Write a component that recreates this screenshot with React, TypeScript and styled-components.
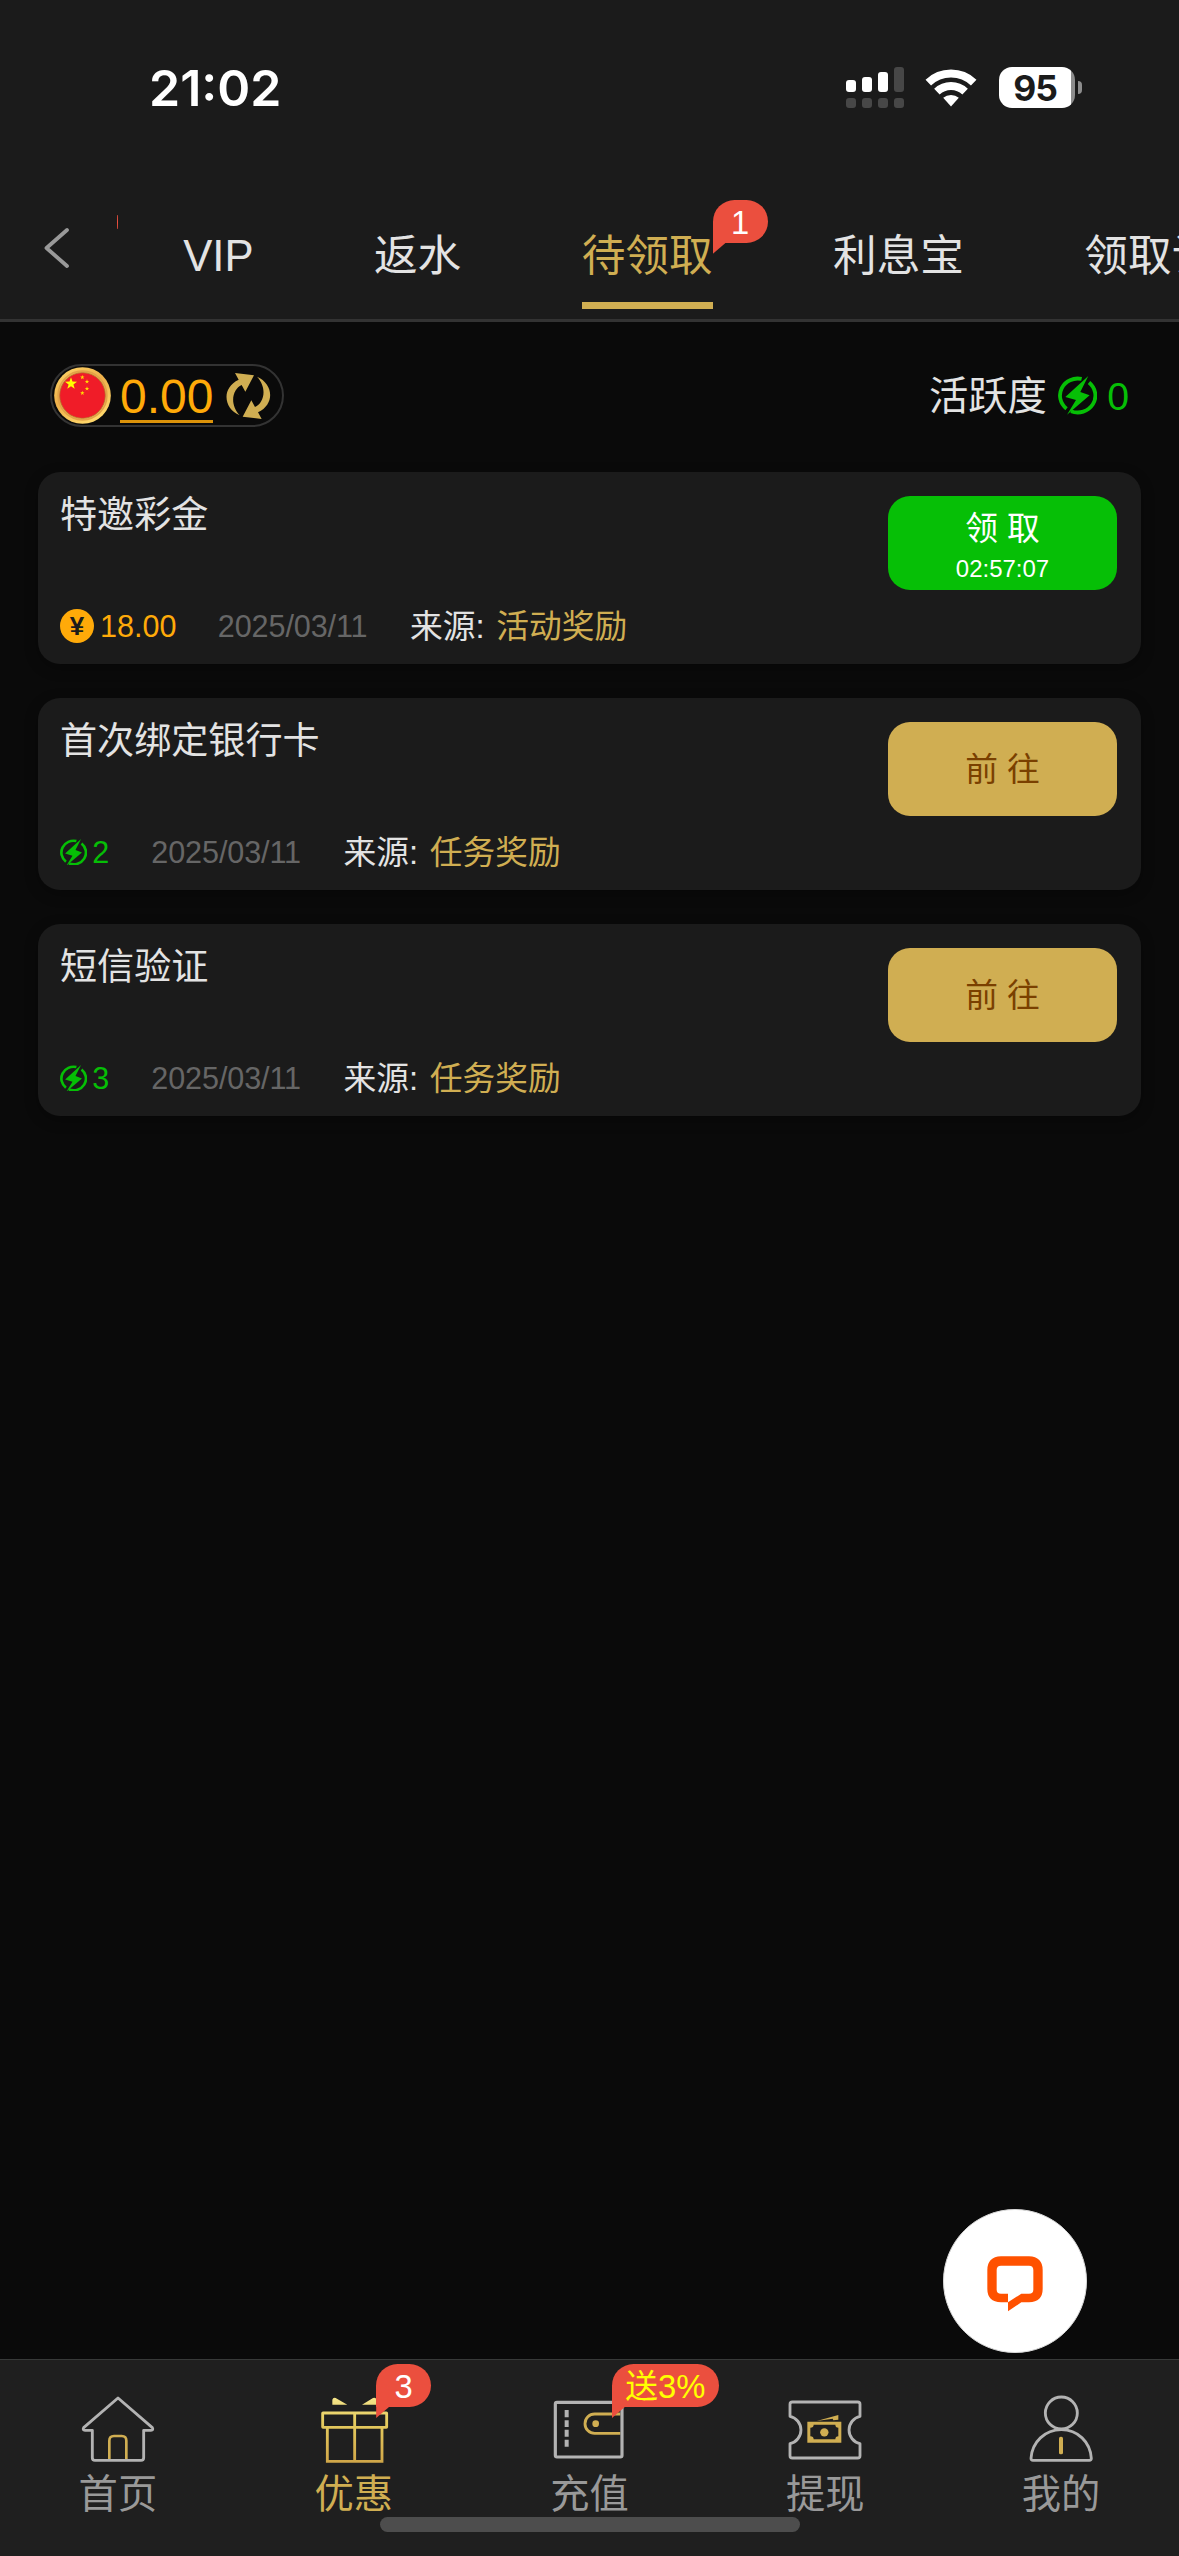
import React from "react";
import styled, { createGlobalStyle } from "styled-components";

const GOLD = "#d0ae52";
const GREEN = "#06bf06";
const RED = "#eb4f3e";
const ORANGE = "#ffaa09";
const GREY = "#b3b3b3";

const GlobalStyle = createGlobalStyle`
  * { box-sizing: border-box; }
  body {
    margin: 0;
    background: #0a0a0a;
    font-family: "Liberation Sans", "Noto Sans CJK SC", sans-serif;
  }
  svg { display: block; flex: none; }
`;

const Screen = styled.div`
  position: relative;
  display: flex;
  flex-direction: column;
  width: 1179px;
  height: 2556px;
  overflow: hidden;
  background: #0a0a0a;
  color: #e3e3e3;
`;

/* ---------- Header ---------- */

const Header = styled.header`
  height: 322px;
  background: #1b1b1b;
  border-bottom: 3px solid #333;
`;

const StatusBar = styled.div`
  display: flex;
  justify-content: space-between;
  height: 190px;
  padding: 67px 97px 0 149px;
`;

const Clock = styled.div`
  height: 42px;
  line-height: 42px;
  color: #fff;
  font-family: Inter, sans-serif;
  font-size: 50px;
  font-weight: 600;
  letter-spacing: 0;
`;

const StatusIcons = styled.div`
  display: flex;
  align-items: flex-start;
  height: 42px;
`;

const Wifi = styled.svg`
  margin: 2px 22px 0 21px;
`;

const Battery = styled.div`
  display: flex;
  align-items: center;
  height: 41px;
`;

const BatteryBody = styled.div`
  width: 76px;
  height: 41px;
  border-radius: 13px;
  background: linear-gradient(90deg, #fff 72px, #8d8d8d 72px);
  color: #1b1b1b;
  font-family: Inter, sans-serif;
  font-size: 35.5px;
  font-weight: 700;
  line-height: 43px;
  text-align: center;
  padding-right: 4px;
  letter-spacing: -1px;
`;

const BatteryCap = styled.div`
  width: 4px;
  height: 13px;
  margin-left: 3px;
  border-radius: 0 4px 4px 0;
  background: #8d8d8d;
`;

const TabBar = styled.nav`
  display: flex;
  height: 129px;
`;

const BackButton = styled.div`
  width: 117px;
  padding: 37px 0 0 43px;
`;

const TabList = styled.div`
  position: relative;
  display: flex;
  flex: 1;
  align-items: center;
  padding-left: 6px;
  overflow: hidden;
`;

const ClippedBadge = styled.span`
  position: absolute;
  left: 0;
  top: 25px;
  width: 1px;
  height: 14px;
  border-radius: 0 50% 50% 0;
  background: ${RED};
`;

const Tab = styled.div<{ $active?: boolean }>`
  flex: none;
  height: 129px;
  margin: 0 60.2px;
  line-height: 131px;
  font-size: 43.67px;
  white-space: nowrap;
  position: relative;
  color: ${(p) => (p.$active ? GOLD : "#e3e3e3")};
  &::after {
    content: "";
    display: ${(p) => (p.$active ? "block" : "none")};
    position: absolute;
    left: 0;
    right: 0;
    bottom: 10px;
    height: 7px;
    background: ${GOLD};
  }
`;

const Bubble = styled.span<{ $left: string; $top: number; $color?: string }>`
  position: absolute;
  left: ${(p) => p.$left};
  top: ${(p) => p.$top}px;
  min-width: 55px;
  height: 43px;
  padding: 0 13.3px;
  border-radius: 22px 22px 22px 0;
  background: ${RED};
  color: ${(p) => p.$color ?? "#fff"};
  font-size: 32.75px;
  line-height: 45px;
  text-align: center;
  white-space: nowrap;
  &::after {
    content: "";
    position: absolute;
    left: 0;
    top: 42px;
    width: 14px;
    height: 12px;
    background: ${RED};
    clip-path: polygon(0 0, 100% 0, 0 100%);
  }
`;

/* ---------- Balance row ---------- */

const Main = styled.main`
  flex: 1;
  padding: 42px 38px 0;
`;

const SummaryRow = styled.div`
  display: flex;
  justify-content: space-between;
  align-items: center;
  height: 63px;
  padding: 0 12px;
`;

const BalancePill = styled.div`
  display: flex;
  align-items: center;
  width: 234px;
  height: 63px;
  padding-left: 2px;
  border: 2px solid #333;
  border-radius: 32px;
`;

const Balance = styled.span`
  margin: 0 13px 0 9px;
  height: 55px;
  border-bottom: 3px solid #dc930a;
  color: ${ORANGE};
  font-size: 48px;
  line-height: 58px;
`;

const Activity = styled.div`
  display: flex;
  align-items: center;
  font-size: 39.3px;
  line-height: 60px;
`;

const ActivityLabel = styled.span`
  margin-right: 11px;
`;

const ActivityValue = styled.span`
  margin-left: 10px;
  padding-top: 1px;
  color: ${GREEN};
`;

/* ---------- Reward cards ---------- */

const CardList = styled.div`
  display: flex;
  flex-direction: column;
  gap: 34px;
  margin-top: 45px;
`;

const Card = styled.section`
  display: flex;
  justify-content: space-between;
  height: 192px;
  padding: 24px 24px 0 22px;
  border-radius: 22px;
  background: #1b1b1b;
  box-shadow: 0 4px 14px rgba(0, 0, 0, 0.3);
`;

const CardBody = styled.div`
  display: flex;
  flex-direction: column;
  justify-content: space-between;
  padding-bottom: 17px;
`;

const CardTitle = styled.div`
  font-size: 37.1px;
  line-height: 38px;
`;

const MetaRow = styled.div`
  display: flex;
  align-items: center;
  height: 42px;
  font-size: 30.57px;
  line-height: 42px;
`;

const YuanCoin = styled.span`
  width: 34px;
  height: 34px;
  margin-right: 6px;
  border-radius: 50%;
  background: ${ORANGE};
  color: #1b1b1b;
  font-size: 26px;
  font-weight: 700;
  line-height: 34px;
  text-align: center;
`;

const Amount = styled.span<{ $green?: boolean }>`
  color: ${(p) => (p.$green ? GREEN : ORANGE)};
  margin-left: ${(p) => (p.$green ? 5 : 0)}px;
  margin-right: ${(p) => (p.$green ? 0 : -0.7)}px;
`;

const DateText = styled.span`
  margin: 0 42.6px 0 42px;
  color: #666;
  letter-spacing: -0.1px;
`;

const SourceLabel = styled.span`
  margin-right: 11.5px;
  font-size: 32.75px;
  line-height: 43px;
`;

const Source = styled.span`
  color: ${GOLD};
  font-size: 32.75px;
  line-height: 43px;
`;

const ActionButton = styled.div<{ $claim?: boolean }>`
  display: flex;
  flex-direction: column;
  align-items: center;
  justify-content: center;
  width: 229px;
  height: 94px;
  padding-top: ${(p) => (p.$claim ? 8 : 2)}px;
  border-radius: 22px;
  background: ${(p) => (p.$claim ? GREEN : GOLD)};
  color: ${(p) => (p.$claim ? "#fff" : "#7a4000")};
  font-size: 32.75px;
  line-height: 40px;
`;

const Countdown = styled.span`
  margin-top: 3px;
  font-size: 24px;
  line-height: 34px;
`;

/* ---------- Bottom navigation ---------- */

const BottomNav = styled.nav`
  display: grid;
  grid-template-columns: repeat(5, 1fr);
  height: 197px;
  border-top: 1px solid #383a39;
  background: #1f1f1f;
`;

const NavItem = styled.div<{ $active?: boolean }>`
  position: relative;
  display: flex;
  flex-direction: column;
  align-items: center;
  padding-top: 33px;
  color: ${(p) => (p.$active ? GOLD : "#999")};
  font-size: 39.3px;
  line-height: 59px;
`;

const ChatButton = styled.div`
  position: absolute;
  left: 943px;
  top: 2209px;
  display: flex;
  align-items: center;
  justify-content: center;
  width: 144px;
  height: 144px;
  padding-top: 5px;
  border: 1px solid #d9d9d9;
  border-radius: 50%;
  background: #fff;
`;

const HomeIndicator = styled.div`
  position: absolute;
  left: 380px;
  top: 2517px;
  width: 420px;
  height: 15px;
  border-radius: 8px;
  background: #4d4d4d;
`;

/* ---------- Icons ---------- */

const SignalIcon = () => (
  <svg width="58" height="41" viewBox="0 0 58 41">
    {[13, 10, 5, 0].map((top, i) => (
      <g key={i}>
        <rect x={i * 16} y={top} width="10" height={25 - top} rx="3" fill={i < 3 ? "#fff" : "#474747"} />
        <rect x={i * 16} y="31" width="10" height="10" rx="3" fill="#474747" />
      </g>
    ))}
  </svg>
);

const WifiIcon = () => (
  <Wifi width="52" height="38" viewBox="0 0 52 38">
    <g fill="none" stroke="#fff" strokeWidth="8">
      <path d="M3.3 13.6A33 33 0 0 1 48.7 13.6" />
      <path d="M11.9 22.6A20.5 20.5 0 0 1 40.1 22.6" />
    </g>
    <path d="M26 37.5L18.2 28.8A12 12 0 0 1 33.8 28.8Z" fill="#fff" />
  </Wifi>
);

const BackIcon = () => (
  <svg width="27" height="42" viewBox="0 0 27 42">
    <path d="M24 3L3.5 21L24 39" fill="none" stroke="#999" strokeWidth="3.8" strokeLinecap="round" strokeLinejoin="round" />
  </svg>
);

const starPoints = (cx: number, cy: number, r: number) =>
  Array.from({ length: 10 }, (_, i) => {
    const a = (Math.PI / 5) * i - Math.PI / 2;
    const d = i % 2 ? r * 0.4 : r;
    return `${(cx + d * Math.cos(a)).toFixed(2)},${(cy + d * Math.sin(a)).toFixed(2)}`;
  }).join(" ");

const FlagCoin = () => (
  <svg width="57" height="57" viewBox="162 81 171 171">
    <defs>
      <linearGradient id="coinRim" x1="0" y1="0" x2="0.6" y2="1">
        <stop offset="0" stopColor="#ffd76a" />
        <stop offset="0.5" stopColor="#eeb04a" />
        <stop offset="1" stopColor="#ffd76a" />
      </linearGradient>
    </defs>
    <circle cx="247.500" cy="166.500" r="85" fill="url(#coinRim)" />
    <circle cx="247.500" cy="166.500" r="73" fill="none" stroke="#e2a348" strokeWidth="5" />
    <circle cx="247.500" cy="166.500" r="68.500" fill="#f01c28" stroke="#b5702b" strokeWidth="2.500" />
    <polygon points={starPoints(213, 131, 19)} fill="#ffff00" />
    {[[247, 112], [261, 125], [261, 146], [247, 159]].map(([x, y]) => (
      <polygon key={`${x}-${y}`} points={starPoints(x, y, 7)} fill="#ffe000" />
    ))}
  </svg>
);

const refreshHalf = "M706 97L763 104L737 153L726 133C699 145 688 190 720 224C672 204 664 142 717 117Z";
const RefreshIcon = () => (
  <svg width="45" height="46" viewBox="679 97 135 138" fill={GOLD}>
    <path d={refreshHalf} />
    <path d={refreshHalf} transform="rotate(180 746 166)" />
  </svg>
);

const BoltIcon = ({ size }: { size: number }) => (
  <svg width={size} height={(size * 116) / 118} viewBox="834 108 118 116">
    <g fill="none" stroke={GREEN} strokeWidth="11.500">
      <path d="M904.900 116.800A53 51 0 0 0 859.600 206.100" />
      <path d="M927.100 127.400A53 51 0 0 1 873.100 213.800" />
    </g>
    <path d="M925 108L856 171L888 180L861 224L929 166L901 156Z" fill={GREEN} />
  </svg>
);

const HomeIcon = () => (
  <svg width="80" height="72" viewBox="234 160 240 216" fill="none" strokeLinejoin="round">
    <path d="M328 360V303Q328 289 342 289H365Q379 289 379 303V360" stroke={GOLD} strokeWidth="8" />
    <path
      d="M354 175L457 264Q461 272 453 272H431V354Q431 362 423 362H285Q277 362 277 354V272H255Q247 272 251 264Z"
      stroke={GREY}
      strokeWidth="8.500"
    />
  </svg>
);

const GiftIcon = () => (
  <svg width="80" height="72" viewBox="941 160 240 216">
    <defs>
      <linearGradient id="giftGold" gradientUnits="userSpaceOnUse" x1="0" y1="174" x2="0" y2="369">
        <stop offset="0" stopColor="#f4e48a" />
        <stop offset="0.350" stopColor="#e6cd60" />
        <stop offset="1" stopColor="#d0a648" />
      </linearGradient>
    </defs>
    <path d="M996 195V180Q998 173 1006 175L1041 195ZM1085 195L1118 175Q1129 172 1129 182V195Z" fill="url(#giftGold)" />
    <g fill="none" stroke="url(#giftGold)" strokeWidth="8.500">
      <rect x="967" y="220" width="192" height="43" rx="1" />
      <path d="M981 263V365H1145V263M1063 220V365" />
    </g>
  </svg>
);

const WalletIcon = () => (
  <svg width="80" height="72" viewBox="208 160 240 216" fill="none">
    <path d="M422 223H345A29 29 0 0 0 345 281H422" stroke={GOLD} strokeWidth="8.500" />
    <circle cx="348" cy="252" r="10" fill={GOLD} />
    <rect x="227" y="188" width="200" height="164" rx="5" stroke={GREY} strokeWidth="9.500" />
    <path d="M261 211V233M261 242V262M261 270V291M261 300V321" stroke={GREY} strokeWidth="12" />
  </svg>
);

const CashIcon = () => (
  <svg width="80" height="72" viewBox="917 160 240 216">
    <path
      d="M932 230V194Q932 187 939 187H1135Q1142 187 1142 194V230A42 42 0 0 0 1142 312V348Q1142 355 1135 355H939Q932 355 932 348V312A42 42 0 0 0 932 230Z"
      fill="none"
      stroke={GREY}
      strokeWidth="8.500"
      strokeLinejoin="round"
    />
    <g fill={GOLD}>
      <path d="M1012 244L1077 226V240L1062 242L1060 237Z" />
      <path
        fillRule="evenodd"
        d="M984 246H1086V309H984ZM1003 255Q1003 264 993 264V290Q1003 290 1003 299H1068Q1068 290 1077 290V264Q1068 264 1068 255Z"
      />
      <circle cx="1035" cy="278" r="12.500" />
    </g>
  </svg>
);

const PersonIcon = () => (
  <svg width="80" height="72" viewBox="483 640 240 216" fill="none">
    <g stroke={GREY} strokeWidth="8.500">
      <circle cx="604" cy="700" r="48" />
      <path d="M513 836C516 787 555 750 604 750S691 787 694 836Q694 842 688 842H519Q513 842 513 836Z" />
    </g>
    <rect x="597" y="771" width="12" height="53" rx="5" fill={GOLD} />
  </svg>
);

const ChatIcon = () => (
  <svg width="56" height="56" viewBox="382 227 168 168">
    <path
      fill="#ff5100"
      fillRule="evenodd"
      d="M424 228H508Q549 230 549 269V326Q549 364 508 366H485L445 393V366H424Q383 364 383 326V269Q383 230 424 228ZM424 256Q411 256 411 269V328Q411 340 424 340H445V366L485 340H508Q521 340 521 328V269Q521 256 508 256Z"
    />
  </svg>
);

/* ---------- Content ---------- */

interface Reward {
  title: string;
  amount: string;
  source: string;
  action: string;
  countdown?: string;
}

const rewards: Reward[] = [
  { title: "特邀彩金", amount: "18.00", source: "活动奖励", action: "领 取", countdown: "02:57:07" },
  { title: "首次绑定银行卡", amount: "2", source: "任务奖励", action: "前 往" },
  { title: "短信验证", amount: "3", source: "任务奖励", action: "前 往" },
];

const tabs = ["VIP", "返水", "待领取", "利息宝", "领取记录"];

const navItems = [
  { label: "首页", icon: <HomeIcon /> },
  { label: "优惠", icon: <GiftIcon />, badge: "3", active: true },
  { label: "充值", icon: <WalletIcon />, badge: "送3%", badgeColor: "#ffff00" },
  { label: "提现", icon: <CashIcon /> },
  { label: "我的", icon: <PersonIcon /> },
];

const RewardCard = ({ title, amount, source, action, countdown }: Reward) => {
  const isCash = Boolean(countdown);
  return (
    <Card>
      <CardBody>
        <CardTitle>{title}</CardTitle>
        <MetaRow>
          {isCash ? <YuanCoin>¥</YuanCoin> : <BoltIcon size={27.3} />}
          <Amount $green={!isCash}>{amount}</Amount>
          <DateText>2025/03/11</DateText>
          <SourceLabel>来源:</SourceLabel>
          <Source>{source}</Source>
        </MetaRow>
      </CardBody>
      <ActionButton $claim={isCash}>
        <span>{action}</span>
        {countdown && <Countdown>{countdown}</Countdown>}
      </ActionButton>
    </Card>
  );
};

export default function App() {
  return (
    <>
      <GlobalStyle />
      <Screen>
        <Header>
          <StatusBar>
            <Clock>21:02</Clock>
            <StatusIcons>
              <SignalIcon />
              <WifiIcon />
              <Battery>
                <BatteryBody>95</BatteryBody>
                <BatteryCap />
              </Battery>
            </StatusIcons>
          </StatusBar>
          <TabBar>
            <BackButton>
              <BackIcon />
            </BackButton>
            <TabList>
              <ClippedBadge />
              {tabs.map((tab) => (
                <Tab key={tab} $active={tab === "待领取"}>
                  {tab}
                  {tab === "待领取" && (
                    <Bubble $left="100%" $top={10}>
                      1
                    </Bubble>
                  )}
                </Tab>
              ))}
            </TabList>
          </TabBar>
        </Header>

        <Main>
          <SummaryRow>
            <BalancePill>
              <FlagCoin />
              <Balance>0.00</Balance>
              <RefreshIcon />
            </BalancePill>
            <Activity>
              <ActivityLabel>活跃度</ActivityLabel>
              <BoltIcon size={39.3} />
              <ActivityValue>0</ActivityValue>
            </Activity>
          </SummaryRow>
          <CardList>
            {rewards.map((reward) => (
              <RewardCard key={reward.title} {...reward} />
            ))}
          </CardList>
        </Main>

        <BottomNav>
          {navItems.map(({ label, icon, badge, badgeColor, active }) => (
            <NavItem key={label} $active={active}>
              {icon}
              <span>{label}</span>
              {badge && (
                <Bubble $left="calc(50% + 22.5px)" $top={4} $color={badgeColor}>
                  {badge}
                </Bubble>
              )}
            </NavItem>
          ))}
        </BottomNav>

        <ChatButton>
          <ChatIcon />
        </ChatButton>
        <HomeIndicator />
      </Screen>
    </>
  );
}
